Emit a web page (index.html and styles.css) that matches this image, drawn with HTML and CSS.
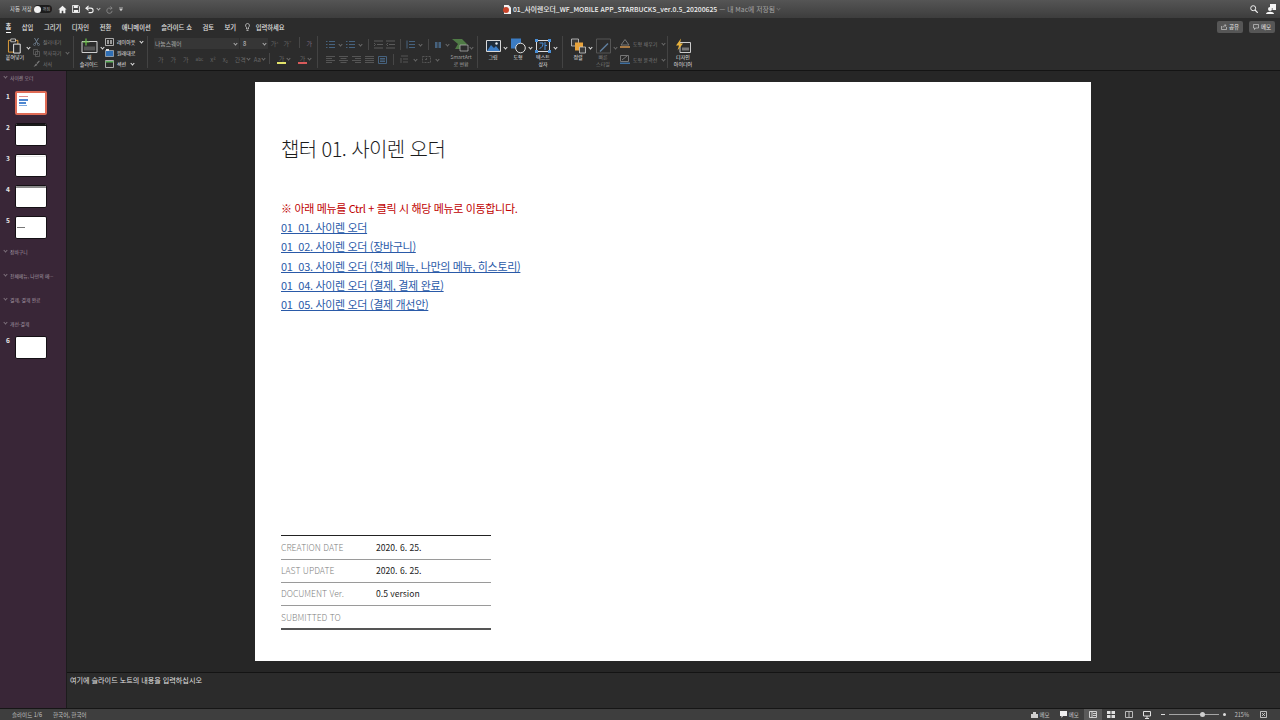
FILE: index.html
```html
<!DOCTYPE html>
<html lang="ko">
<head>
<meta charset="UTF-8">
<title>01_사이렌오더_WF_MOBILE APP_STARBUCKS_ver.0.5_20200625</title>
<link rel="stylesheet" href="styles.css">
</head>
<body>
<div class="app">

    <!-- title bar -->
    <div class="titlebar">
        <div class="quick">
            <span class="autosave">자동 저장</span>
            <span class="toggle"><i></i><b>꺼짐</b></span>
            <svg class="q-icon" width="9" height="9" viewBox="0 0 11 10"><path d="M5.500 0.500 0.500 5h1.500v4.500h2.500V6.500h2v3H9V5h1.500z" fill="#f2f2f2"/></svg>
            <svg class="q-icon" width="8" height="8" viewBox="0 0 9 9"><path d="M.5.500h6.500l1.500 1.500v6.500h-8z" fill="none" stroke="#f2f2f2"/><path d="M2 .5h4.500v3H2zM2 5.500h5v3H2z" fill="#f2f2f2"/></svg>
            <svg class="q-icon q-undo" width="9" height="9" viewBox="0 0 10 9"><path d="M4 .5 1 3l3 2.500M1 3h5.500a2.500 2.500 0 0 1 0 5H4" fill="none" stroke="#f2f2f2" stroke-width="1.200"/></svg>
            <span class="chev chev-q"></span>
            <svg class="q-icon q-dim" width="8" height="9" viewBox="0 0 9 10"><path d="M6 1.500 8 3.500 6 5M8 3.500H4a3 3 0 1 0 4 3" fill="none" stroke="#8a8a8a"/></svg>
            <svg class="q-icon q-more" width="4" height="5" viewBox="0 0 5 6"><path d="M0 .5h5M.5 2h4L2.500 5z" fill="#cfcfcf" stroke="#cfcfcf" stroke-width=".5"/></svg>
        </div>
        <div class="doc-title">
            <svg width="8" height="9" viewBox="0 0 8 9"><path d="M1 0h4.500L8 2.500V9H1z" fill="#f4f4f4"/><circle cx="3" cy="5" r="3" fill="#c9442a"/></svg>
            <span class="doc-name">01_사이렌오더_WF_MOBILE APP_STARBUCKS_ver.0.5_20200625</span>
            <span class="doc-saved">— 내 Mac에 저장됨</span>
            <span class="chev chev-dim"></span>
        </div>
        <div class="title-right">
            <svg width="8" height="8" viewBox="0 0 8 8"><circle cx="3.200" cy="3.200" r="2.500" fill="none" stroke="#eee"/><path d="M5 5l2.800 2.800" stroke="#eee" stroke-width="1.200"/></svg>
            <svg width="10" height="11" viewBox="0 0 10 11"><path d="M4 0h6v6H6.500V4H4z" fill="#f5f5f5"/><circle cx="4" cy="5" r="2" fill="#f5f5f5"/><path d="M0 10c0-3 8-3 8 0z" fill="#f5f5f5"/></svg>
        </div>
    </div>

    <!-- tabs -->
    <div class="tabs">
        <span class="tab tab-on">홈</span>
        <span class="tab">삽입</span>
        <span class="tab">그리기</span>
        <span class="tab">디자인</span>
        <span class="tab">전환</span>
        <span class="tab">애니메이션</span>
        <span class="tab">슬라이드 쇼</span>
        <span class="tab">검토</span>
        <span class="tab">보기</span>
        <span class="tab tab-search">
            <svg width="5" height="8" viewBox="0 0 5 8"><path d="M2.500.5a2 2 0 0 1 1 3.700V6h-2V4.200a2 2 0 0 1 1-3.700zM1.500 7.500h2" fill="none" stroke="#ddd" stroke-width=".7"/></svg>
            입력하세요
        </span>
        <div class="tab-btns">
            <span class="tab-btn">
                <svg width="6" height="6" viewBox="0 0 6 6"><path d="M.5 2v3.500h5V3M2 3.500C2 2 3 1.500 4.500 1.500M3.500.2 5.200 1.500 3.500 2.800" fill="none" stroke="#ddd" stroke-width=".6"/></svg>
                공유
            </span>
            <span class="tab-btn">
                <svg width="6" height="6" viewBox="0 0 6 6"><path d="M.5.500h5v3.500H2.500L1.500 5.500V4h-1z" fill="none" stroke="#ddd" stroke-width=".6"/></svg>
                메모
            </span>
        </div>
    </div>

    <!-- ribbon -->
    <div class="ribbon">
        <div class="group g-clip">
            <div class="big">
                <svg width="17" height="17" viewBox="0 0 17 17"><path d="M1 2.500h10V15H1z" fill="none" stroke="#e8a33c"/><path d="M3.500 1h5v3h-5z" fill="#2c2c2c" stroke="#ddd" stroke-width=".8"/><path d="M6.500 6.500h7V16h-7z" fill="#2c2c2c" stroke="#f0f0f0"/></svg>
                <span class="big-label lit">붙여넣기</span>
            </div>
            <span class="chev chev-lit chev-big chev-tight"></span>
            <div class="stack">
                <span class="small dim"><svg width="7" height="8" viewBox="0 0 7 8"><path d="M1.500 0 5 6M5.500 0 2 6" stroke="#6f7f8f"/><circle cx="1.500" cy="6.500" r="1" fill="none" stroke="#6f7f8f" stroke-width=".7"/><circle cx="5.500" cy="6.500" r="1" fill="none" stroke="#6f7f8f" stroke-width=".7"/></svg>잘라내기</span>
                <span class="small dim"><svg width="7" height="8" viewBox="0 0 7 8"><path d="M.5.500h4v5h-4zM2.500 2.500h4v5h-4z" fill="#2c2c2c" stroke="#666" stroke-width=".7"/></svg>복사하기 <span class="chev chev-dim"></span></span>
                <span class="small dim"><svg width="7" height="8" viewBox="0 0 7 8"><path d="M.5 7 3 3.500l1.500 1.500zM3.500 3l2.500-2.500.8.8L4.500 4z" fill="#7a7a7a"/></svg>서식</span>
            </div>
        </div>

        <div class="group g-slide">
            <div class="big">
                <svg width="17" height="15" viewBox="0 0 17 15"><path d="M1 3h15v11H1z" fill="none" stroke="#cfcfcf"/><path d="M3 8h11v4H3z" fill="#555"/><path d="M5 0v7M1.500 3.500h7" stroke="#6cc04a" stroke-width="1.200"/></svg>
                <span class="big-label lit">새<br>슬라이드</span>
            </div>
            <span class="chev chev-lit chev-big chev-tight"></span>
            <div class="stack">
                <span class="small lit"><svg width="9" height="8" viewBox="0 0 9 8"><path d="M.5.500h8v7h-8z" fill="none" stroke="#ccc" stroke-width=".8"/><path d="M2 2h2v4H2zM5 2h2v4H5z" fill="#999"/></svg>레이아웃 <span class="chev chev-lit"></span></span>
                <span class="small lit"><svg width="9" height="8" viewBox="0 0 9 8"><path d="M.5 1.500h8v6h-8z" fill="#2f6fb5" stroke="#ccc" stroke-width=".6"/><path d="M1 0h3v2H1z" fill="#ddd"/></svg>원래대로</span>
                <span class="small lit"><svg width="9" height="8" viewBox="0 0 9 8"><path d="M.5.500h8v7h-8z" fill="none" stroke="#ccc" stroke-width=".8"/><path d="M.5 1h8v1.500h-8z" fill="#5cb05c"/></svg>섹션 <span class="chev chev-lit"></span></span>
            </div>
        </div>

        <div class="group g-font">
            <div class="row">
                <span class="select sel-font">나눔스퀘어<span class="chev chev-mid"></span></span>
                <span class="select sel-size">8<span class="chev chev-mid"></span></span>
                <span class="glyph">가<sup>^</sup></span>
                <span class="glyph">가<sup>ˇ</sup></span>
                <span class="vline"></span>
                <span class="glyph glyph-clear">가</span>
            </div>
            <div class="row row-tools">
                <span class="glyph">가</span>
                <span class="glyph">가</span>
                <span class="glyph">가</span>
                <span class="glyph glyph-abc">abc</span>
                <span class="glyph">x²</span>
                <span class="glyph">x₂</span>
                <span class="glyph glyph-drop">간격<span class="chev chev-dim"></span></span>
                <span class="glyph glyph-drop">Aa<span class="chev chev-dim"></span></span>
                <span class="vline"></span>
                <span class="glyph glyph-color lit">가<i class="swatch sw-yellow"></i></span><span class="chev chev-dim"></span>
                <span class="glyph glyph-color lit">가<i class="swatch sw-red"></i></span><span class="chev chev-dim"></span>
            </div>
        </div>

        <div class="group g-para">
            <div class="para-tools">
                <div class="row row-para">
                    <svg class="ico-list" width="9" height="9" viewBox="0 0 9 9"><path d="M0 1.500h1.500M3 1.500h6M0 4.500h1.500M3 4.500h6M0 7.500h1.500M3 7.500h6" stroke="#46627e"/></svg><span class="chev chev-dim"></span>
                    <svg class="ico-list" width="9" height="9" viewBox="0 0 9 9"><path d="M0 1.500h1.500M3 1.500h6M0 4.500h1.500M3 4.500h6M0 7.500h1.500M3 7.500h6" stroke="#46627e"/></svg><span class="chev chev-dim"></span>
                    <span class="vline"></span>
                    <svg class="ico-list" width="9" height="9" viewBox="0 0 9 9"><path d="M0 1h9M3 4.500h6M0 8h9M0 3l1.500 1.500L0 6" stroke="#5a5a5a" fill="none"/></svg>
                    <svg class="ico-list" width="9" height="9" viewBox="0 0 9 9"><path d="M0 1h9M3 4.500h6M0 8h9M2 3 .5 4.500 2 6" stroke="#5a5a5a" fill="none"/></svg>
                    <span class="vline"></span>
                    <svg class="ico-list" width="9" height="9" viewBox="0 0 9 9"><path d="M3 1.500h6M3 4.500h6M3 7.500h6M1 .5v8" stroke="#46627e"/></svg><span class="chev chev-dim"></span>
                    <span class="vline"></span>
                    <svg class="ico-list" width="8" height="8" viewBox="0 0 8 8"><path d="M1 1h2.500v6H1zM4.500 1H7v6H4.500z" fill="#46627e"/></svg><span class="chev chev-dim"></span>
                </div>
                <div class="row row-para row-align">
                    <svg class="ico-list" width="9" height="8" viewBox="0 0 9 8"><path d="M0 .5h9M0 2.500h6M0 4.500h9M0 6.500h6" stroke="#555"/></svg>
                    <svg class="ico-list" width="9" height="8" viewBox="0 0 9 8"><path d="M0 .5h9M1.500 2.500h6M0 4.500h9M1.500 6.500h6" stroke="#555"/></svg>
                    <svg class="ico-list" width="9" height="8" viewBox="0 0 9 8"><path d="M0 .5h9M3 2.500h6M0 4.500h9M3 6.500h6" stroke="#555"/></svg>
                    <svg class="ico-list" width="9" height="8" viewBox="0 0 9 8"><path d="M0 .5h9M0 2.500h9M0 4.500h9M0 6.500h9" stroke="#555"/></svg>
                    <svg class="ico-list" width="9" height="8" viewBox="0 0 9 8"><path d="M.5.500h8v7h-8zM2 2.500h5M2 4h5M2 5.500h5" stroke="#46627e" fill="none"/></svg>
                    <span class="vline"></span>
                    <svg class="ico-list" width="9" height="9" viewBox="0 0 9 9"><path d="M1 1h7M3 4h5M3 7h5M1 3v5" stroke="#555" fill="none"/></svg><span class="chev chev-dim"></span>
                    <svg class="ico-list" width="9" height="9" viewBox="0 0 9 9"><path d="M.5 1.500h8v6h-8zM4.500 3v3M3 4.500h3" stroke="#555" fill="none" stroke-dasharray="2 1"/></svg><span class="chev chev-dim"></span>
                </div>
            </div>
            <div class="big big-art">
                <svg width="18" height="14" viewBox="0 0 18 14"><path d="M0 0h10l5 5-5 5H3l3-5z" fill="#4f7a45"/><path d="M8 6h8v6H8z" fill="#2c2c2c" stroke="#bbb" stroke-width=".7"/></svg>
                <span class="big-label soft">SmartArt<br>로 변환</span>
            </div>
            <span class="chev chev-dim chev-big chev-art"></span>
        </div>

        <div class="group g-insert">
            <div class="big big-ins">
                <svg width="15" height="12" viewBox="0 0 15 12"><path d="M.5.500h14v11H.5z" fill="#1f2d3c" stroke="#d8d8d8"/><path d="M1 11 5 5l3 3 2-2 4 5z" fill="#3b7cc4"/><circle cx="10.500" cy="3.500" r="1.200" fill="#dfe6ee"/></svg>
                <span class="big-label lit">그림</span>
            </div>
            <span class="chev chev-lit chev-big"></span>
            <div class="big big-ins">
                <svg width="15" height="15" viewBox="0 0 15 15"><path d="M0 0h10v10H0z" fill="#3b7cc4"/><circle cx="9.500" cy="9.500" r="4.800" fill="#2c2c2c" stroke="#e2e2e2"/></svg>
                <span class="big-label lit">도형</span>
            </div>
            <span class="chev chev-lit chev-big"></span>
            <div class="big big-ins">
                <svg width="16" height="14" viewBox="0 0 16 14"><path d="M1.500 1.500h13v11h-13z" fill="none" stroke="#ddd"/><path d="M0 0h3v3H0zM13 0h3v3h-3zM0 11h3v3H0zM13 11h3v3h-3z" fill="#4a90d9"/><path d="M4.500 4H8c0 3-1 4.500-3.500 5.500M10 3v8M10 6.500h2" fill="none" stroke="#4a90d9"/></svg>
                <span class="big-label lit">텍스트<br>상자</span>
            </div>
            <span class="chev chev-lit chev-big"></span>
        </div>

        <div class="group g-arrange">
            <div class="big big-ins">
                <svg width="15" height="15" viewBox="0 0 15 15"><path d="M.5.500h7v7h-7z" fill="#3a3a3a" stroke="#ccc" stroke-width=".8"/><path d="M4 4h8v8H4z" fill="#e8a33c"/><path d="M8.500 8.500h6v6h-6z" fill="#3a3a3a" stroke="#ccc" stroke-width=".8"/></svg>
                <span class="big-label lit">정렬</span>
            </div>
            <span class="chev chev-lit chev-big"></span>
            <div class="big big-ins">
                <svg width="15" height="15" viewBox="0 0 15 15"><path d="M.5.500h14v14H.5z" fill="none" stroke="#555"/><path d="M4 13 12 5" stroke="#5f7f9f" stroke-width="1.500"/></svg>
                <span class="big-label dim">빠른<br>스타일</span>
            </div>
            <span class="chev chev-dim chev-big"></span>
            <div class="stack stack-shape">
                <span class="small dim"><svg width="10" height="9" viewBox="0 0 10 9"><path d="M5 .5 9 6H1z" fill="none" stroke="#777"/><path d="M0 7h10v2H0z" fill="#a87a45"/></svg>도형 채우기 <span class="chev chev-dim"></span></span>
                <span class="small dim"><svg width="10" height="9" viewBox="0 0 10 9"><path d="M.5.500h8v6h-8zM2 5l5-4" fill="none" stroke="#777"/><path d="M0 7.500h10V9H0z" fill="#3f6f9f"/></svg>도형 윤곽선 <span class="chev chev-dim"></span></span>
            </div>
        </div>

        <div class="group g-design">
            <div class="big">
                <svg width="16" height="15" viewBox="0 0 16 15"><path d="M5 4h10.500v10H5z" fill="none" stroke="#ccc"/><path d="M7 9h7v3H7z" fill="#777"/><path d="M6 0 1 7h3L2.500 12 8 5H5z" fill="#e8b23c"/></svg>
                <span class="big-label lit">디자인<br>아이디어</span>
            </div>
        </div>
    </div>

    <!-- slide panel + editor -->
    <div class="main">
        <aside class="sidebar">
            <div class="sec-head sec-first"><span class="chev chev-side"></span>사이렌 오더</div>
            <div class="thumb-row">
                <span class="num">1</span>
                <div class="thumb thumb-on">
                    <span class="t-bar t-red"></span>
                    <span class="t-bar t-blue"></span>
                    <span class="t-bar t-blue t-short"></span>
                    <span class="t-bar t-blue2"></span>
                </div>
            </div>
            <div class="thumb-row">
                <span class="num">2</span>
                <div class="thumb"><span class="t-top"></span></div>
            </div>
            <div class="thumb-row">
                <span class="num">3</span>
                <div class="thumb"><span class="t-top t-faint"></span></div>
            </div>
            <div class="thumb-row">
                <span class="num">4</span>
                <div class="thumb"><span class="t-top t-grey"></span></div>
            </div>
            <div class="thumb-row">
                <span class="num">5</span>
                <div class="thumb thumb-five"><span class="t-mid"></span></div>
            </div>
            <div class="sec-head"><span class="chev chev-side"></span>장바구니</div>
            <div class="sec-head"><span class="chev chev-side"></span>전체메뉴, 나만의 메···</div>
            <div class="sec-head"><span class="chev chev-side"></span>결제, 결제 완료</div>
            <div class="sec-head"><span class="chev chev-side"></span>개선-결제</div>
            <div class="thumb-row">
                <span class="num">6</span>
                <div class="thumb"></div>
            </div>
        </aside>

        <div class="editor">
            <div class="stage">
                <div class="slide">
                    <h1 class="slide-title">챕터 01. 사이렌 오더</h1>
                    <p class="notice">※ 아래 메뉴를 Ctrl + 클릭 시 해당 메뉴로 이동합니다.</p>
                    <a class="menu-link">01_01. 사이렌 오더</a>
                    <a class="menu-link">01_02. 사이렌 오더 (장바구니)</a>
                    <a class="menu-link">01_03. 사이렌 오더 (전체 메뉴, 나만의 메뉴, 히스토리)</a>
                    <a class="menu-link">01_04. 사이렌 오더 (결제, 결제 완료)</a>
                    <a class="menu-link">01_05. 사이렌 오더 (결제 개선안)</a>
                    <table class="info">
                        <tr><th>CREATION DATE</th><td>2020. 6. 25.</td></tr>
                        <tr><th>LAST UPDATE</th><td>2020. 6. 25.</td></tr>
                        <tr><th>DOCUMENT Ver.</th><td>0.5 version</td></tr>
                        <tr><th>SUBMITTED TO</th><td></td></tr>
                    </table>
                </div>
            </div>
            <div class="notes">여기에 슬라이드 노트의 내용을 입력하십시오</div>
        </div>
    </div>

    <!-- status bar -->
    <div class="status">
        <span class="st-text st-page">슬라이드 1/6</span>
        <span class="st-text">한국어, 한국어</span>
        <div class="st-right">
            <span class="st-item"><svg width="7" height="6" viewBox="0 0 7 6"><path d="M2 0h3v2h2v4H0V2h2z" fill="#cfcfcf"/></svg>메모</span>
            <span class="st-item st-comment"><svg width="7" height="7" viewBox="0 0 7 7"><path d="M0 0h7v5H3L1.500 7V5H0z" fill="#f0f0f0"/></svg>메모</span>
            <span class="view view-on"><svg width="8" height="7" viewBox="0 0 8 7"><path d="M.5.500h7v6h-7zM3 .5v6M4 2.500h3M4 4.500h3" fill="none" stroke="#eee" stroke-width=".8"/></svg></span>
            <span class="view"><svg width="8" height="7" viewBox="0 0 8 7"><path d="M0 0h3.500v3H0zM4.500 0H8v3H4.500zM0 4h3.500v3H0zM4.500 4H8v3H4.500z" fill="#e0e0e0"/></svg></span>
            <span class="view"><svg width="8" height="7" viewBox="0 0 8 7"><path d="M.5.500h7v6h-7zM4 .5v6" fill="none" stroke="#bbb"/></svg></span>
            <span class="view"><svg width="8" height="8" viewBox="0 0 8 8"><path d="M.5.500h7v4.500h-7zM4 5v3M2 7.500h4" fill="none" stroke="#e0e0e0"/></svg></span>
            <div class="zoom-slider">
                <span class="z-btn"></span>
                <span class="z-track"><i></i></span>
                <span class="z-btn z-plus"></span>
            </div>
            <span class="st-zoom">215%</span>
            <svg width="7" height="7" viewBox="0 0 7 7"><path d="M.5.500h6v6h-6zM2 2l3 3M5 2 2 5" fill="none" stroke="#ddd" stroke-width=".8"/></svg>
        </div>
    </div>
</div>
</body>
</html>
```

FILE: styles.css
```css
* {
    box-sizing: border-box;
}
html, body {
    margin: 0;
    padding: 0;
}
body {
    width: 1280px;
    height: 720px;
    overflow: hidden;
    background: #262626;
    font-family: "Noto Sans CJK KR", "Noto Sans", sans-serif;
}
.app {
    width: 1280px;
    height: 720px;
    display: flex;
    flex-direction: column;
}

/* shared bits */
.chev {
    display: inline-block;
    flex: none;
    width: 3px;
    height: 3px;
    border-right: 1px solid #777;
    border-bottom: 1px solid #777;
    transform: rotate(45deg);
    margin: 0 2px 1px 2px;
}
.chev-lit { border-color: #e4e4e4; }
.chev-mid { border-color: #aaa; }
.chev-dim { border-color: #6a6a6a; }
.lit { color: #e6e6e6; }
.dim { color: #7d7d7d; }
.soft { color: #a0a0a0; }
.vline {
    flex: none;
    width: 1px;
    height: 11px;
    background: #474747;
    margin: 0 3px;
}

/* title bar */
.titlebar {
    height: 18px;
    flex: none;
    display: flex;
    align-items: center;
    position: relative;
    background: linear-gradient(#555, #3d3d3d);
    padding: 0 4px 0 10px;
}
.quick {
    display: flex;
    align-items: center;
}
.autosave {
    font-size: 5.500px;
    color: #dcdcdc;
    margin-right: 2px;
}
.toggle {
    width: 18px;
    height: 8px;
    border-radius: 4px;
    background: #1d1d1d;
    display: flex;
    align-items: center;
    margin-right: 6px;
}
.toggle i {
    width: 7px;
    height: 7px;
    border-radius: 50%;
    background: #f2f2f2;
}
.toggle b {
    font-size: 4px;
    font-weight: 400;
    color: #aaa;
    margin-left: 2px;
}
.q-icon {
    margin-right: 5px;
}
.q-undo {
    margin-right: 3px;
}
.chev-q {
    border-color: #bbb;
    margin: 0 5px 1px 0;
}
.q-more {
    margin-left: 1px;
}
.doc-title {
    position: absolute;
    left: 503px;
    top: 0;
    height: 18px;
    display: flex;
    align-items: center;
    white-space: nowrap;
    font-size: 6.800px;
}
.doc-name {
    color: #f0f0f0;
    font-weight: 500;
    margin-left: 2px;
}
.doc-saved {
    color: #a5a5a5;
    margin-left: 2px;
}
.title-right {
    margin-left: auto;
    display: flex;
    align-items: center;
    gap: 8px;
}

/* tabs */
.tabs {
    height: 17px;
    flex: none;
    background: #2c2c2c;
    display: flex;
    align-items: center;
    gap: 10.500px;
    padding: 1px 5px 0 5.500px;
}
.tab {
    font-size: 6.300px;
    line-height: 11px;
    color: #e2e2e2;
    font-weight: 500;
}
.tab-on {
    color: #fff;
    border-bottom: 1px solid #fff;
}
.tab-search {
    display: flex;
    align-items: center;
    gap: 6px;
    margin-left: -2px;
}
.tab-btns {
    margin-left: auto;
    display: flex;
    gap: 6px;
}
.tab-btn {
    height: 12px;
    width: 26px;
    border-radius: 2px;
    background: #565656;
    display: flex;
    align-items: center;
    justify-content: center;
    gap: 2px;
    font-size: 5.500px;
    color: #e6e6e6;
}

/* ribbon */
.ribbon {
    height: 36px;
    flex: none;
    display: flex;
    align-items: stretch;
    background: #2c2c2c;
    border-bottom: 1px solid #141414;
    padding: 1px 0 2px 5px;
}
.group {
    display: flex;
    align-items: flex-start;
    border-right: 1px solid #434343;
    flex: none;
}
.g-clip { width: 69px; }
.g-slide { width: 74px; padding-left: 5px; }
.g-slide .stack { margin-left: 0; }
.g-font { width: 170px; padding-left: 6px; display: block; }
.g-para { width: 160px; padding-left: 8px; }
.g-insert { width: 85px; padding-left: 7px; }
.g-arrange { width: 105px; padding-left: 7px; }
.g-design { border-right: 0; padding-left: 5px; }
.big {
    display: flex;
    flex-direction: column;
    align-items: center;
    width: 20px;
    flex: none;
}
.big-label {
    font-size: 5px;
    line-height: 6.500px;
    text-align: center;
    white-space: nowrap;
}
.big svg {
    flex: none;
    margin-top: 2px;
    height: 16px;
}
.big-art {
    width: 24px;
}
.big-ins {
    width: 16px;
}
.chev-big {
    margin: 10px 3px 0 3px;
}
.chev-tight {
    margin: 10px 1px 0 2px;
}
.chev-art {
    margin-left: -3px;
}
.stack {
    display: flex;
    flex-direction: column;
    gap: 2px;
    padding-top: 1px;
    margin-left: 2px;
}
.stack-shape {
    gap: 7px;
    padding-top: 3px;
    margin-left: 0;
}
.small {
    display: flex;
    align-items: center;
    gap: 3px;
    height: 9px;
    font-size: 5px;
    white-space: nowrap;
}
.row {
    display: flex;
    align-items: center;
    white-space: nowrap;
}
.row-tools {
    margin-top: 4px;
    gap: 7px;
    padding-left: 4px;
}
.row-tools .vline {
    margin: 0;
}
.row-tools .chev {
    margin: 0 1px 1px;
}
.select {
    height: 11px;
    display: flex;
    align-items: center;
    justify-content: space-between;
    background: #363636;
    font-size: 5.800px;
    color: #aaa;
    padding-left: 1px;
    margin-top: 2px;
}
.sel-font { width: 86px; }
.sel-size { width: 28px; margin-left: 1px; margin-right: 3px; padding-left: 3px; color: #ccc; }
.glyph {
    display: inline-flex;
    align-items: center;
    font-size: 6px;
    color: #676767;
    line-height: 9px;
}
.row > .glyph {
    margin-top: 1px;
}
.row:first-child .glyph {
    margin-right: 5px;
}
.glyph sup {
    font-size: 4px;
    line-height: 4px;
}
.glyph-abc {
    font-size: 4.500px;
}
.glyph-drop {
    margin-right: -4px;
}
.glyph-clear {
    color: #7a6a80;
    margin-left: 3px;
}
.glyph-color {
    flex-direction: column;
    font-size: 6px;
    line-height: 7px;
    margin-right: -7px;
}
.swatch {
    width: 9px;
    height: 2px;
}
.sw-yellow { background: #e3e36a; }
.sw-red { background: #d85a5a; }
.para-tools {
    width: 123px;
    flex: none;
}
.row-para {
    height: 11px;
    margin-top: 3px;
    gap: 3px;
}
.row-para .chev {
    margin: 0 1px 1px;
}
.row-para .vline {
    margin: 0 2px;
}
.row-para + .row-para {
    margin-top: 4px;
}
.row-align {
    gap: 4px;
}
.ico-list {
    flex: none;
}

/* main area */
.main {
    flex: 1;
    display: flex;
    min-height: 0;
}
.sidebar {
    width: 67px;
    flex: none;
    background: #392637;
    border-right: 1px solid #1c1c1c;
    padding-top: 1px;
}
.sec-head {
    height: 24px;
    display: flex;
    align-items: center;
    font-size: 4.800px;
    color: #a79ba5;
    white-space: nowrap;
    padding-left: 2px;
}
.sec-first {
    height: 10px;
    margin-bottom: 9px;
}
.thumb-row + .sec-head {
    margin-top: -7px;
}
.chev-side {
    border-color: #7d717b;
    margin-right: 3px;
}
.thumb-row {
    display: flex;
    height: 31px;
    padding-left: 6px;
}
.num {
    width: 9px;
    margin-top: 1px;
    font-size: 6.500px;
    line-height: 9px;
    color: #e8e8e8;
    font-weight: 700;
}
.thumb {
    width: 32px;
    height: 23px;
    margin-top: 1px;
    background: #fff;
    border-radius: 2px;
    border: 1px solid #151015;
    display: flex;
    flex-direction: column;
    overflow: hidden;
}
.thumb-on {
    height: 24px;
    margin-top: 0;
    border: 2px solid #df6b55;
    padding: 3px 0 0 2px;
    gap: 1px;
}
.t-bar {
    display: block;
    height: 2px;
    width: 9px;
}
.t-red { height: 1px; background: #dc8c8c; width: 9px; margin-bottom: 1px; }
.t-blue { background: #4d86d0; }
.t-short { width: 7px; }
.t-blue2 { background: #7ea8dc; width: 8px; height: 1px; }
.t-top {
    display: block;
    height: 2px;
    background: #1a1a1a;
}
.t-faint { background: #e6e6e6; height: 1px; margin-top: 1px; }
.t-grey { background: #8a8a8a; }
.thumb-five {
    justify-content: center;
}
.t-mid {
    display: block;
    width: 8px;
    height: 1px;
    background: #777;
    margin-left: 1px;
}

/* editor */
.editor {
    flex: 1;
    display: flex;
    flex-direction: column;
    min-width: 0;
}
.stage {
    height: 601px;
    flex: none;
    background: #262626;
    padding: 11px 0 0 188px;
}
.slide {
    width: 836px;
    height: 579px;
    background: #fff;
    padding: 51px 0 0 26px;
    display: flex;
    flex-direction: column;
    align-items: flex-start;
}
.slide-title {
    margin: 0 0 35px;
    font-size: 20px;
    letter-spacing: -.6px;
    line-height: 31px;
    font-weight: 300;
    color: #1c1c1c;
}
.notice {
    margin: 0;
    font-size: 11px;
    letter-spacing: -.35px;
    line-height: 19.200px;
    color: #c00000;
}
.menu-link {
    font-size: 11px;
    letter-spacing: -.33px;
    line-height: 19.200px;
    color: #2a5aa8;
    text-decoration: underline;
    text-decoration-skip-ink: none;
    white-space: nowrap;
}
.info {
    margin-top: 221px;
    width: 210px;
    border-collapse: collapse;
    border-top: 1px solid #222;
    border-bottom: 2px solid #555;
}
.info th, .info td {
    height: 23.300px;
    padding: 0 0 1px;
    font-size: 8.600px;
    font-weight: 300;
    text-align: left;
    border-bottom: 1px solid #9a9a9a;
    white-space: nowrap;
}
.info th {
    width: 95px;
    color: #808080;
}
.info td {
    color: #1c1c1c;
    font-weight: 400;
}
.notes {
    flex: 1;
    background: #2b2b2b;
    border-top: 1px solid #141414;
    font-size: 7.100px;
    line-height: 13px;
    color: #e2e2e2;
    padding: 1px 0 0 3px;
}

/* status bar */
.status {
    height: 12px;
    flex: none;
    display: flex;
    align-items: center;
    background: #3e3e3e;
    border-top: 1px solid #161616;
    padding-left: 12px;
}
.st-text {
    font-size: 5.500px;
    color: #c4c4c4;
}
.st-page {
    margin-right: 11px;
}
.st-right {
    margin-left: auto;
    display: flex;
    align-items: center;
    height: 100%;
    padding-right: 13px;
}
.st-item {
    display: flex;
    align-items: center;
    gap: 2px;
    font-size: 5.500px;
    color: #c4c4c4;
}
.st-comment {
    margin-left: 10px;
    margin-right: 5px;
}
.view {
    width: 18px;
    height: 100%;
    display: flex;
    align-items: center;
    justify-content: center;
}
.view-on {
    background: #5a5a5a;
}
.zoom-slider {
    display: flex;
    align-items: center;
    gap: 4px;
    margin-left: 5px;
}
.z-btn {
    width: 4px;
    height: 1px;
    background: #ddd;
}
.z-plus {
    height: 3px;
    width: 3px;
    border-radius: 50%;
}
.z-track {
    width: 50px;
    height: 1px;
    background: #a5a5a5;
    position: relative;
}
.z-track i {
    position: absolute;
    left: 31px;
    top: -2px;
    width: 5px;
    height: 5px;
    border-radius: 50%;
    background: #cfcfcf;
}
.st-zoom {
    font-size: 5.500px;
    color: #c4c4c4;
    margin: 0 11px 0 9px;
}
```
